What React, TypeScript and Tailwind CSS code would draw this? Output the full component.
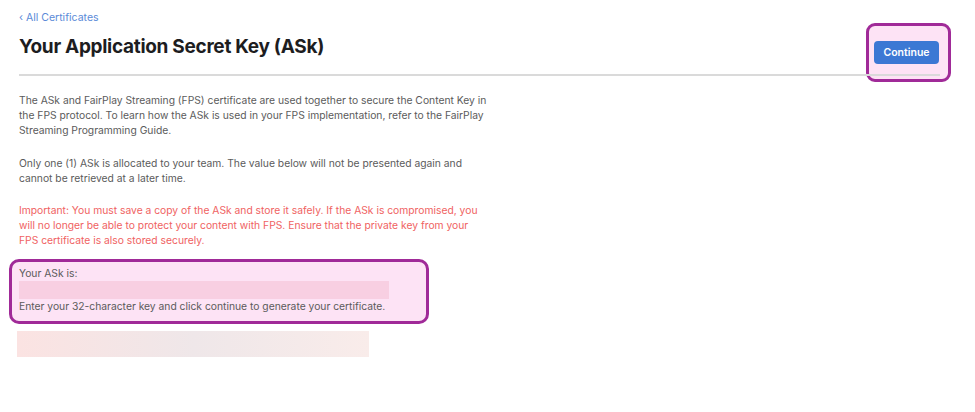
import React from "react";

export default function App() {
  return (
    <div className="relative w-[975px] h-[412px] bg-white overflow-hidden" style={{ fontFamily: "Inter, 'Noto Sans', sans-serif" }}>
      <div className="pl-[19px] pt-[11px]">
        <a className="block text-[10.5px] leading-[14px] text-[#5a8ad8]">‹ All Certificates</a>
        <div className="flex items-start justify-between pr-[36px] mt-[9px]">
          <h1 className="text-[19px] leading-[26px] font-bold text-[#1d1d1f] tracking-[-0.3px]">Your Application Secret Key (ASk)</h1>
          <div className="relative mt-[4px]">
            <div className="absolute left-[-8px] right-[-12px] top-[-15px] bottom-[-18px] rounded-[9px] border-[3px] border-[#a02a98] bg-[#fde3f5]" />
            <button className="relative w-[65px] h-[23px] rounded-[4px] bg-[#3c78d4] text-white text-[10.5px] font-semibold">Continue</button>
          </div>
        </div>
        <div className="relative mt-[10px] mr-[35px] h-[2px] bg-[#dadada]" />

        <div className="mt-[17px] w-[480px] text-[10.3px] leading-[14.6px] text-[#5b5b5b]">
          <p>
            The ASk and FairPlay Streaming (FPS) certificate are used together to secure the Content Key in<br />
            the FPS protocol. To learn how the ASk is used in your FPS implementation, refer to the FairPlay<br />
            Streaming Programming Guide.
          </p>
          <p className="mt-[19px]">
            Only one (1) ASk is allocated to your team. The value below will not be presented again and<br />
            cannot be retrieved at a later time.
          </p>
          <p className="mt-[18px] text-[#f06262]">
            Important: You must save a copy of the ASk and store it safely. If the ASk is compromised, you<br />
            will no longer be able to protect your content with FPS. Ensure that the private key from your<br />
            FPS certificate is also stored securely.
          </p>
        </div>
      </div>

      <div className="ml-[9px] mt-[12px] w-[420px] rounded-[10px] border-[3px] border-[#a02a98] bg-[#fde3f5] pl-[7px] pt-[4px] pb-[8px] text-[10.3px] leading-[14.6px] text-[#5b5b5b]">
        <p>Your ASk is:</p>
        <div className="h-[18px] w-[370px] bg-[#f8cfe2]" />
        <p>Enter your 32-character key and click continue to generate your certificate.</p>
      </div>
      <div className="ml-[17px] mt-[7px] h-[26px] w-[352px] bg-gradient-to-r from-[#fbe3e2] via-[#efe7e9] to-[#f9ecea]" />
    </div>
  );
}
